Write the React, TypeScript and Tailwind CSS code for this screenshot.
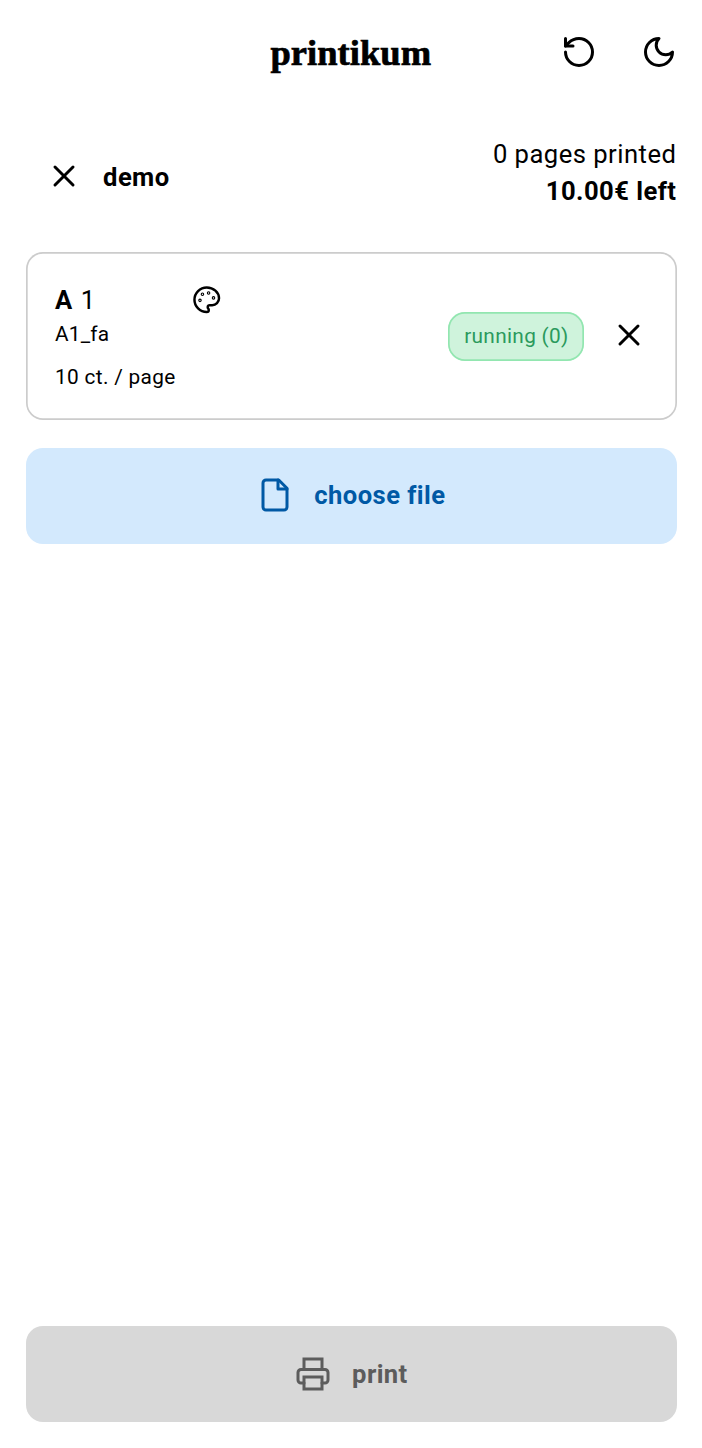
import type { ReactNode } from "react";

type IconProps = { size?: number; className?: string; children: ReactNode };

function Icon({ size = 36, className = "", children }: IconProps) {
  return (
    <svg
      width={size}
      height={size}
      viewBox="0 0 24 24"
      fill="none"
      stroke="currentColor"
      strokeWidth="2"
      strokeLinecap="round"
      strokeLinejoin="round"
      className={`shrink-0 ${className}`}
    >
      {children}
    </svg>
  );
}

function CloseIcon() {
  return (
    <Icon>
      <path d="M18 6 6 18" />
      <path d="m6 6 12 12" />
    </Icon>
  );
}

function Header() {
  return (
    <header className="flex h-[105px] items-start justify-between">
      <div className="w-[115px]" />
      <h1 className="pt-[30px] font-['Liberation_Serif',serif] text-[36.5px] leading-[46px] font-bold tracking-[0.05px] [-webkit-text-stroke:0.7px_black]">
        printikum
      </h1>
      <div className="flex w-[115.4px] gap-11 pt-[34px]">
        <button aria-label="refresh">
          <Icon>
            <path d="M3 12a9 9 0 1 0 9-9 9.75 9.75 0 0 0-6.74 2.74L3 8" />
            <path d="M3 3v5h5" />
          </Icon>
        </button>
        <button aria-label="theme">
          <Icon>
            <path d="M12 3a6 6 0 0 0 9 9 9 9 0 1 1-9-9Z" />
          </Icon>
        </button>
      </div>
    </header>
  );
}

function Account() {
  return (
    <section className="flex h-[147px] items-start justify-between text-[25.6px]">
      <div className="flex items-center gap-[21.5px] pt-[52px] pl-5">
        <button aria-label="log out">
          <CloseIcon />
        </button>
        <span className="pt-[2px] leading-9 font-bold">demo</span>
      </div>
      <div className="pt-[31px] text-right leading-[37px]">
        <p className="tracking-[0.48px]">0 pages printed</p>
        <p className="font-bold tracking-[0.45px]">10.00€ left</p>
      </div>
    </section>
  );
}

function PrinterCard() {
  return (
    <section className="-mr-[0.8px] flex h-[168px] items-center justify-between rounded-[17px] pr-[29.8px] pl-[29.5px] shadow-[inset_0_0_0_1.7px_#cccccc]">
      <div className="w-[166px] pt-[2px]">
        <div className="flex items-center justify-between text-[25.6px] leading-9">
          <p>
            <b>A</b>
            <span className="ml-[8px]">1</span>
          </p>
          <Icon size={29.5}>
            <circle cx="13.5" cy="6.5" r="1" strokeWidth="0.9" />
            <circle cx="17.5" cy="10.5" r="1" strokeWidth="0.9" />
            <circle cx="8.5" cy="7.5" r="1" strokeWidth="0.9" />
            <circle cx="6.5" cy="12.5" r="1" strokeWidth="0.9" />
            <path d="M12 2C6.5 2 2 6.5 2 12s4.5 10 10 10c.926 0 1.648-.746 1.648-1.688 0-.437-.18-.835-.437-1.125-.29-.289-.438-.652-.438-1.125a1.64 1.64 0 0 1 1.668-1.668h1.996c3.051 0 5.555-2.503 5.555-5.554C21.965 6.012 17.461 2 12 2z" />
          </Icon>
        </div>
        <p className="text-[20.8px] leading-8 tracking-[0.2px]">A1_fa</p>
        <p className="mt-[11px] text-[20.8px] leading-8 tracking-[0.32px]">
          10 ct. / page
        </p>
      </div>
      <div className="flex items-center gap-[27px]">
        <span className="flex h-[49px] w-[136px] items-center justify-center rounded-[17px] bg-[#cff3dc] pt-[2px] text-[20.8px] tracking-[0.32px] text-[#2b9a5d] shadow-[inset_0_0_0_1.7px_#92e6b0]">
          running (0)
        </span>
        <button aria-label="remove" className="-mt-[2px]">
          <CloseIcon />
        </button>
      </div>
    </section>
  );
}

export default function App() {
  return (
    <main className="flex h-[1448px] flex-col bg-white px-[25.6px] pb-[26px] font-[Roboto,sans-serif] tracking-[0.4px] text-black">
      <Header />
      <Account />
      <PrinterCard />
      <button className="-mr-[0.8px] mt-[27.5px] flex h-24 shrink-0 items-center justify-center gap-[21px] rounded-[17px] bg-[#d3e9fd] text-[25.6px] font-bold tracking-[0.45px] text-[#0059a5]">
        <Icon className="-mt-[2px]">
          <path d="M14.5 2H6a2 2 0 0 0-2 2v16a2 2 0 0 0 2 2h12a2 2 0 0 0 2-2V7.5L14.5 2z" />
          <path d="M14 2v6h6" />
        </Icon>
        choose file
      </button>
      <button
        disabled
        className="-mr-[0.8px] mt-auto flex h-24 shrink-0 items-center justify-center gap-[21px] rounded-[17px] bg-[#d8d8d8] text-[25.6px] font-bold text-[#5c5c5c]"
      >
        <Icon className="-mt-px">
          <path d="M6 9V2h12v7" strokeLinejoin="miter" />
          <path d="M6 18H4a2 2 0 0 1-2-2v-5a2 2 0 0 1 2-2h16a2 2 0 0 1 2 2v5a2 2 0 0 1-2 2h-2" />
          <path d="M6 14h12v8H6z" strokeLinejoin="miter" />
        </Icon>
        print
      </button>
    </main>
  );
}
